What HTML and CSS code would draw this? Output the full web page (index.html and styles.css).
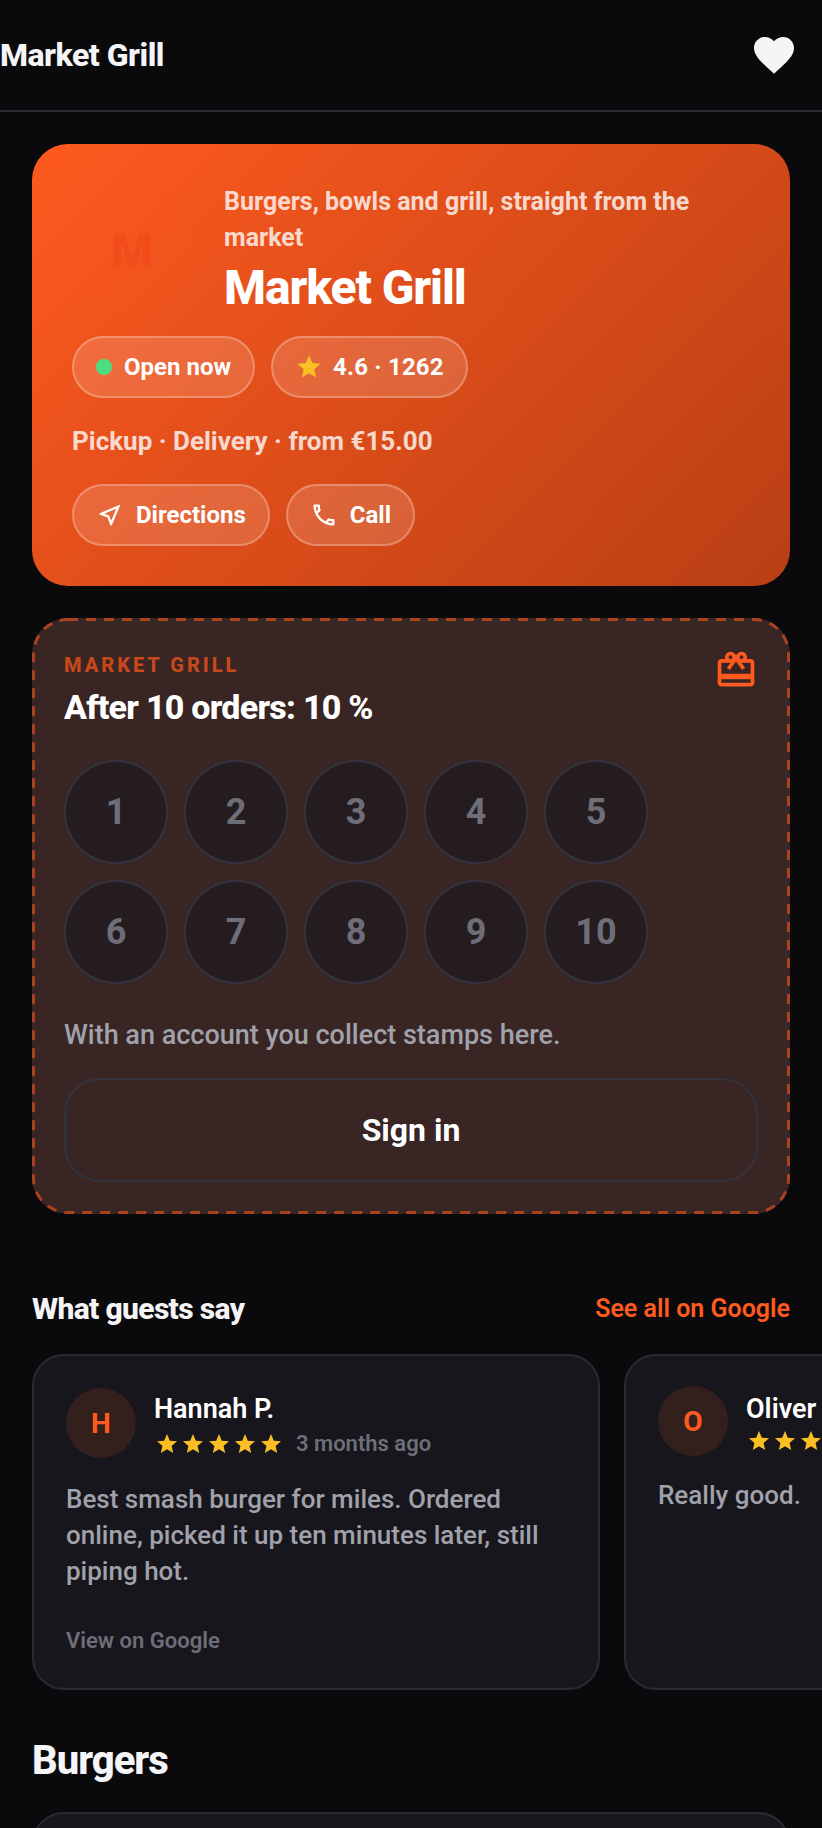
FILE: index.html
```html
<!DOCTYPE html>
<html>
<head>
    <title>Market Grill</title>
    <link rel="stylesheet" href="styles.css">
</head>
<body>
    <header class="topbar">
        <div class="topbar-title">Market Grill</div>
        <button class="fav-btn" aria-label="Favourite">
            <svg viewBox="0 0 24 24" width="48" height="48"><path fill="currentColor" d="M12 21.35l-1.45-1.32C5.4 15.36 2 12.28 2 8.5 2 5.42 4.42 3 7.5 3c1.74 0 3.41.81 4.5 2.09C13.09 3.81 14.76 3 16.5 3 19.58 3 22 5.42 22 8.5c0 3.78-3.4 6.86-8.55 11.54L12 21.35z"/></svg>
        </button>
    </header>

    <main class="page">
        <section class="hero">
            <div class="hero-top">
                <div class="hero-logo">M</div>
                <div class="hero-info">
                    <p class="hero-tagline">Burgers, bowls and grill, straight from the market</p>
                    <h1 class="hero-name">Market Grill</h1>
                </div>
            </div>
            <div class="chip-row">
                <span class="chip"><span class="dot"></span>Open now</span>
                <span class="chip chip-rating">
                    <svg viewBox="0 0 24 24" width="28" height="28"><path fill="#fbbf24" d="M12 17.27L18.18 21l-1.64-7.03L22 9.24l-7.19-.61L12 2 9.19 8.63 2 9.24l5.46 4.73L5.82 21z"/></svg>
                    4.6 · 1262
                </span>
            </div>
            <p class="hero-meta">Pickup · Delivery · from €15.00</p>
            <div class="chip-row">
                <a class="chip">
                    <svg viewBox="0 0 24 24" width="28" height="28"><path fill="currentColor" d="M17.27 6.73l-4.24 10.13-1.32-3.42-.32-.83-.82-.32-3.43-1.33 10.13-4.23M21 3L3 10.53v.98l6.84 2.65L12.48 21h.98L21 3z"/></svg>
                    Directions
                </a>
                <a class="chip">
                    <svg viewBox="0 0 24 24" width="28" height="28"><path fill="currentColor" d="M6.54 5c.06.89.21 1.76.45 2.59l-1.2 1.2c-.41-1.2-.67-2.47-.76-3.79h1.51m9.86 12.02c.85.24 1.72.39 2.6.45v1.49c-1.32-.09-2.59-.35-3.8-.75l1.2-1.19M7.5 3H4c-.55 0-1 .45-1 1 0 9.39 7.61 17 17 17 .55 0 1-.45 1-1v-3.49c0-.55-.45-1-1-1-1.24 0-2.45-.2-3.57-.57-.1-.04-.21-.05-.31-.05-.26 0-.51.1-.71.29l-2.2 2.2c-2.83-1.45-5.15-3.76-6.59-6.59l2.2-2.2c.28-.28.36-.67.25-1.02C8.7 6.45 8.5 5.25 8.5 4c0-.55-.45-1-1-1z"/></svg>
                    Call
                </a>
            </div>
        </section>

        <section class="loyalty">
            <!-- dashed outline, the css dashed border comes out too short -->
            <svg class="loyalty-outline" viewBox="0 0 758 596"><rect x="1.5" y="1.5" width="755" height="593" rx="34.5" /></svg>
            <div class="loyalty-head">
                <div>
                    <div class="loyalty-label">MARKET GRILL</div>
                    <div class="loyalty-title">After 10 orders: 10 %</div>
                </div>
                <svg class="loyalty-icon" viewBox="0 0 24 24" width="44" height="44"><path fill="currentColor" d="M20 6h-2.18c.11-.31.18-.65.18-1 0-1.66-1.34-3-3-3-1.05 0-1.96.54-2.5 1.35l-.5.67-.5-.68C10.96 2.54 10.05 2 9 2 7.34 2 6 3.34 6 5c0 .35.07.69.18 1H4c-1.11 0-1.99.89-1.99 2L2 19c0 1.11.89 2 2 2h16c1.11 0 2-.89 2-2V8c0-1.11-.89-2-2-2zm-5-2c.55 0 1 .45 1 1s-.45 1-1 1-1-.45-1-1 .45-1 1-1zM9 4c.55 0 1 .45 1 1s-.45 1-1 1-1-.45-1-1 .45-1 1-1zm11 15H4v-2h16v2zm0-5H4V8h5.08L7 10.83 8.62 12 11 8.76l1-1.36 1 1.36L15.38 12 17 10.83 14.92 8H20v6z"/></svg>
            </div>
            <div class="stamps">
                <div class="stamp">1</div>
                <div class="stamp">2</div>
                <div class="stamp">3</div>
                <div class="stamp">4</div>
                <div class="stamp">5</div>
                <div class="stamp">6</div>
                <div class="stamp">7</div>
                <div class="stamp">8</div>
                <div class="stamp">9</div>
                <div class="stamp">10</div>
            </div>
            <p class="loyalty-note">With an account you collect stamps here.</p>
            <button class="signin-btn">Sign in</button>
        </section>

        <section class="reviews">
            <div class="section-head">
                <h2 class="section-title">What guests say</h2>
                <a class="section-link">See all on Google</a>
            </div>
            <div class="review-row">
                <article class="review-card">
                    <div class="review-head">
                        <div class="avatar">H</div>
                        <div class="review-info">
                            <div class="review-name">Hannah P.</div>
                            <div class="review-sub">
                                <span class="stars">
                                    <svg viewBox="0 0 24 24" width="24" height="24"><path fill="currentColor" d="M12 17.27L18.18 21l-1.64-7.03L22 9.24l-7.19-.61L12 2 9.19 8.63 2 9.24l5.46 4.73L5.82 21z"/></svg>
                                    <svg viewBox="0 0 24 24" width="24" height="24"><path fill="currentColor" d="M12 17.27L18.18 21l-1.64-7.03L22 9.24l-7.19-.61L12 2 9.19 8.63 2 9.24l5.46 4.73L5.82 21z"/></svg>
                                    <svg viewBox="0 0 24 24" width="24" height="24"><path fill="currentColor" d="M12 17.27L18.18 21l-1.64-7.03L22 9.24l-7.19-.61L12 2 9.19 8.63 2 9.24l5.46 4.73L5.82 21z"/></svg>
                                    <svg viewBox="0 0 24 24" width="24" height="24"><path fill="currentColor" d="M12 17.27L18.18 21l-1.64-7.03L22 9.24l-7.19-.61L12 2 9.19 8.63 2 9.24l5.46 4.73L5.82 21z"/></svg>
                                    <svg viewBox="0 0 24 24" width="24" height="24"><path fill="currentColor" d="M12 17.27L18.18 21l-1.64-7.03L22 9.24l-7.19-.61L12 2 9.19 8.63 2 9.24l5.46 4.73L5.82 21z"/></svg>
                                </span>
                                <span class="review-date">3 months ago</span>
                            </div>
                        </div>
                    </div>
                    <p class="review-text">Best smash burger for miles. Ordered online, picked it up ten minutes later, still piping hot.</p>
                    <a class="review-link">View on Google</a>
                </article>
                <article class="review-card review-card-short">
                    <div class="review-head">
                        <div class="avatar">O</div>
                        <div class="review-info">
                            <div class="review-name">Oliver</div>
                            <div class="review-sub">
                                <span class="stars">
                                    <svg viewBox="0 0 24 24" width="24" height="24"><path fill="currentColor" d="M12 17.27L18.18 21l-1.64-7.03L22 9.24l-7.19-.61L12 2 9.19 8.63 2 9.24l5.46 4.73L5.82 21z"/></svg>
                                    <svg viewBox="0 0 24 24" width="24" height="24"><path fill="currentColor" d="M12 17.27L18.18 21l-1.64-7.03L22 9.24l-7.19-.61L12 2 9.19 8.63 2 9.24l5.46 4.73L5.82 21z"/></svg>
                                    <svg viewBox="0 0 24 24" width="24" height="24"><path fill="currentColor" d="M12 17.27L18.18 21l-1.64-7.03L22 9.24l-7.19-.61L12 2 9.19 8.63 2 9.24l5.46 4.73L5.82 21z"/></svg>
                                </span>
                            </div>
                        </div>
                    </div>
                    <p class="review-text">Really good.</p>
                </article>
            </div>
        </section>

        <h2 class="menu-title">Burgers</h2>
        <div class="menu-card"></div>
    </main>
</body>
</html>
```

FILE: styles.css
```css
* {
    box-sizing: border-box;
}

html,
body {
    height: 1828px;
    overflow: hidden;
}

body {
    margin: 0;
    background-color: #0a0a0c;
    color: #f5f5f7;
    font-family: Roboto, "Liberation Sans", sans-serif;
}

p,
h1,
h2 {
    margin: 0;
}

.topbar {
    height: 112px;
    display: flex;
    align-items: center;
    justify-content: space-between;
    padding-right: 24px;
    border-bottom: 2px solid #2a2a32;
}

.topbar-title {
    font-size: 32px;
    font-weight: 800;
    letter-spacing: -0.5px;
}

.fav-btn {
    display: flex;
    padding: 0;
    border: none;
    background: none;
    color: #f5f5f7;
}

.page {
    padding: 32px 32px 0;
}

.hero {
    height: 442px;
    padding: 40px;
    border-radius: 36px;
    background: linear-gradient(135deg, #ff5a1f, #b83f14);
}

.hero-top {
    display: flex;
    align-items: center;
    gap: 32px;
    margin-bottom: 20px;
}

.hero-logo {
    flex: 0 0 120px;
    height: 120px;
    display: flex;
    align-items: center;
    justify-content: center;
    border-radius: 50%;
    background-color: rgba(255, 90, 31, 0.1);
    color: #f24c1a;
    font-size: 48px;
    font-weight: 800;
}

.hero-tagline {
    font-size: 25px;
    font-weight: 700;
    line-height: 36px;
    color: rgba(255, 255, 255, 0.8);
}

.hero-name {
    margin-top: 4px;
    font-size: 48px;
    line-height: 56px;
    font-weight: 800;
    letter-spacing: -1.1px;
    color: #fff;
}

.chip-row {
    display: flex;
    gap: 16px;
}

.chip {
    height: 62px;
    display: inline-flex;
    align-items: center;
    gap: 12px;
    padding: 0 22px;
    border: 2px solid rgba(255, 255, 255, 0.25);
    border-radius: 31px;
    background-color: rgba(255, 255, 255, 0.14);
    color: #fff;
    font-size: 24px;
    font-weight: 700;
}

.chip-rating {
    gap: 10px;
    letter-spacing: 0.2px;
}

.dot {
    width: 16px;
    height: 16px;
    border-radius: 50%;
    background-color: #4ade80;
}

.hero-meta {
    margin: 25px 0 25px;
    font-size: 26px;
    line-height: 36px;
    font-weight: 700;
    color: rgba(255, 255, 255, 0.8);
}

.loyalty {
    position: relative;
    height: 596px;
    margin-top: 32px;
    padding: 35px 32px 32px;
    border-radius: 36px;
    background-color: #382524;
}

.loyalty-outline {
    position: absolute;
    top: 0;
    left: 0;
    width: 100%;
    height: 100%;
    fill: none;
    stroke: #a8431e;
    stroke-width: 3;
    stroke-dasharray: 10 8;
}

.loyalty-head {
    display: flex;
    justify-content: space-between;
}

.loyalty-label {
    font-size: 20px;
    font-weight: 800;
    letter-spacing: 3px;
    color: #c9481a;
}

.loyalty-title {
    margin-top: 10px;
    font-size: 34px;
    font-weight: 800;
    letter-spacing: -0.75px;
    color: #fff;
}

.loyalty-icon {
    margin: -5px 0 0 0;
    color: #ff5a1f;
}

.stamps {
    display: flex;
    flex-wrap: wrap;
    gap: 16px;
    margin-top: 33px;
}

.stamp {
    width: 104px;
    height: 104px;
    display: flex;
    align-items: center;
    justify-content: center;
    border: 2px solid #33333f;
    border-radius: 50%;
    background-color: #241c1f;
    color: #6e6e78;
    font-size: 36px;
    font-weight: 700;
}

.loyalty-note {
    margin-top: 33px;
    font-size: 27px;
    line-height: 36px;
    font-weight: 500;
    color: #a1a1aa;
}

.signin-btn {
    width: 100%;
    height: 104px;
    margin-top: 25px;
    border: 2px solid #33333f;
    border-radius: 36px;
    background: none;
    color: #fff;
    font-family: inherit;
    font-size: 32px;
    font-weight: 700;
}

.reviews {
    margin-top: 77px;
}

.section-head {
    display: flex;
    align-items: center;
    justify-content: space-between;
}

.section-title {
    font-size: 30px;
    font-weight: 800;
    letter-spacing: -0.65px;
}

.section-link {
    font-size: 25px;
    font-weight: 600;
    color: #ff5a1f;
}

.review-row {
    display: flex;
    gap: 24px;
    margin-top: 28px;
    margin-right: -32px;
    overflow: hidden;
}

.review-card {
    flex: 0 0 568px;
    height: 336px;
    padding: 32px;
    border: 2px solid #2a2a32;
    border-radius: 32px;
    background-color: #16161c;
}

.review-head {
    display: flex;
    gap: 18px;
}

.avatar {
    flex: 0 0 70px;
    height: 70px;
    display: flex;
    align-items: center;
    justify-content: center;
    border-radius: 50%;
    background-color: #33201c;
    color: #ff5a1f;
    font-size: 28px;
    font-weight: 700;
}

.review-info {
    margin-top: 5px;
}

.review-name {
    font-size: 27px;
    font-weight: 600;
    color: #fff;
}

.review-sub {
    display: flex;
    align-items: center;
    gap: 13px;
    margin-top: 6px;
}

.stars {
    display: flex;
    gap: 2px;
    padding-left: 1px;
    color: #fbbf24;
}

.review-date {
    font-size: 22px;
    font-weight: 600;
    color: #6e6e78;
}

.review-text {
    margin-top: 23px;
    font-size: 26px;
    line-height: 36px;
    font-weight: 500;
    color: #a1a1aa;
}

.review-link {
    display: block;
    margin-top: 39px;
    font-size: 22px;
    font-weight: 600;
    color: #6e6e78;
}

.review-card-short {
    padding-top: 30px;
}

.review-card-short .review-info {
    margin-top: 7px;
}

.review-card-short .review-sub {
    margin-top: 4px;
}

.review-card-short .review-text {
    margin-top: 21px;
}

.menu-title {
    margin-top: 47px;
    font-size: 40px;
    font-weight: 800;
    letter-spacing: -1px;
}

.menu-card {
    height: 200px;
    margin-top: 28px;
    border: 2px solid #2a2a32;
    border-radius: 32px;
    background-color: #16161c;
}
```
